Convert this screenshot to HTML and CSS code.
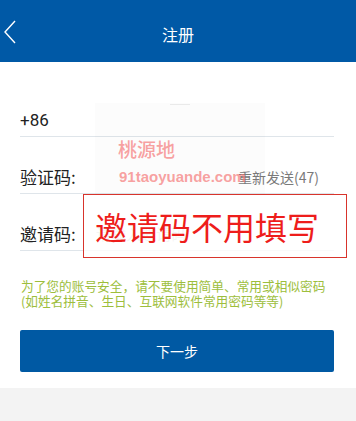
FILE: index.html
```html
<!DOCTYPE html>
<html lang="zh-CN">
<head>
<meta charset="utf-8">
<title>注册</title>
<link rel="stylesheet" href="styles.css">
</head>
<body>
<header class="topbar">
  <svg class="back" width="14" height="26" viewBox="0 0 14 26"><polyline points="12,1 2,12 12,23" fill="none" stroke="#fff" stroke-width="1.4"/></svg>
  <h1 class="title">注册</h1>
</header>
<main class="panel">
  <div class="form">
    <div class="row"><span class="value">+86</span></div>
    <div class="row"><span class="label">验证码:</span><span class="input"></span><span class="resend">重新发送(47)</span></div>
    <div class="row"><span class="label">邀请码:</span><span class="input placeholder">请输入邀请码</span></div>
  </div>
  <p class="tip">为了您的账号安全，请不要使用简单、常用或相似密码<br>(如姓名拼音、生日、互联网软件常用密码等等)</p>
  <button class="next">下一步</button>

  <div class="wm-box"></div>
  <div class="wm-dash"></div>
  <div class="wm-cn">桃源地</div>
  <div class="wm-url">91taoyuande.com</div>
  <div class="notice">邀请码不用填写</div>
</main>
</body>
</html>
```
FILE: styles.css
```css
* { box-sizing: border-box; }
html, body { margin: 0; padding: 0; }
body {
  width: 356px;
  height: 421px;
  background: #f3f3f3;
  font-family: "Noto Sans CJK SC", "Roboto", sans-serif;
  overflow: hidden;
}
.topbar {
  height: 62px;
  background: #0059a6;
  display: flex;
  align-items: center;
  justify-content: center;
  position: relative;
}
.back {
  position: absolute;
  left: 3px;
  top: 20px;
}
.title {
  margin: 0;
  color: #fff;
  font-size: 16px;
  font-weight: 400;
  line-height: 20px;
  margin-top: 6px;
}
.panel {
  position: relative;
  background: #fff;
  height: 326px;
  padding: 18px 22px 0 20px;
}
.row {
  height: 57px;
  padding-top: 30px;
  padding-bottom: 6px;
  border-bottom: 1px solid #dfe5ea;
  display: flex;
  align-items: center;
  line-height: 20px;
  font-size: 17px;
  color: #222;
}
.value { font-family: "Roboto", sans-serif; font-size: 17px; }
.label { width: 76px; }
.input { flex: 1; }
.placeholder { color: #c8c8c8; font-size: 15px; }
.resend {
  color: #7a7a7a;
  font-size: 14px;
  margin-right: 15px;
}
.tip {
  margin: 28px 0 0 1px;
  color: #9dbe3c;
  font-size: 12.7px;
  line-height: 14.5px;
  white-space: nowrap;
}
.next {
  display: block;
  width: 314px;
  height: 42px;
  margin-top: 22px;
  border: none;
  border-radius: 2px;
  background: #0059a3;
  color: #fff;
  font-family: "Noto Sans CJK SC", sans-serif;
  font-size: 14px;
  padding: 0;
}
.wm-box {
  position: absolute;
  left: 95px;
  top: 41px;
  width: 170px;
  height: 92px;
  background: rgba(0, 0, 0, 0.012);
}
.wm-dash {
  position: absolute;
  left: 170px;
  top: 42px;
  width: 20px;
  height: 1px;
  background: #eaeaea;
}
.wm-cn {
  position: absolute;
  left: 118px;
  top: 76px;
  font-size: 19px;
  line-height: 22px;
  font-weight: 500;
  color: rgba(245, 120, 120, 0.7);
}
.wm-url {
  position: absolute;
  left: 119px;
  top: 106px;
  font-family: "Liberation Sans", sans-serif;
  font-weight: 700;
  font-size: 15px;
  line-height: 18px;
  color: rgba(245, 120, 120, 0.7);
}
.notice {
  position: absolute;
  left: 83px;
  top: 132px;
  width: 264px;
  height: 64px;
  border: 1.5px solid #d8342c;
  background: rgba(255, 255, 255, 0.8);
  color: #ee1d1b;
  font-size: 32px;
  line-height: 62px;
  padding-left: 11px;
  white-space: nowrap;
}
```
